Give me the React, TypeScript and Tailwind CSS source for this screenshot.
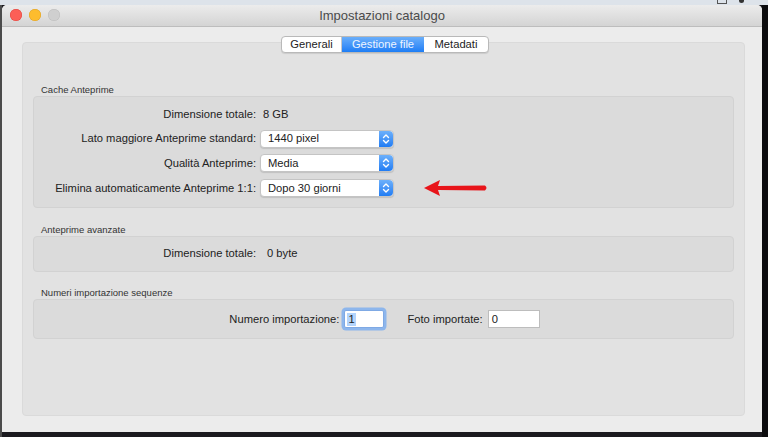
import React from 'react';

const font = { fontFamily: '"Liberation Sans", Arial, sans-serif' };

function Stepper() {
  return (
    <div className="flex h-full w-[14px] items-center justify-center rounded-r-[4px] bg-gradient-to-b from-[#6cb0fb] to-[#1f7cf3]">
      <svg width="8" height="12" viewBox="0 0 8 12" fill="none" stroke="white" strokeWidth="1.4" strokeLinecap="round" strokeLinejoin="round">
        <path d="M1.5 4.5 L4 2 L6.5 4.5" />
        <path d="M1.5 7.5 L4 10 L6.5 7.5" />
      </svg>
    </div>
  );
}

function Popup({ value }: { value: string }) {
  return (
    <div className="ml-[4px] flex h-[18px] w-[134px] items-center rounded-[4px] border border-[#c4c4c4] bg-white shadow-[0_1px_1px_rgba(0,0,0,0.12)]">
      <span className="flex-1 pl-[7px] text-[11.2px] text-[#222]">{value}</span>
      <Stepper />
    </div>
  );
}

function Row({ label, children }: { label: string; children: React.ReactNode }) {
  return (
    <div className="flex h-[18px] items-center">
      <div className="w-[222px] text-right text-[11.2px] text-[#222]">{label}</div>
      {children}
    </div>
  );
}

function Group({ title, children, className }: { title: string; children: React.ReactNode; className: string }) {
  return (
    <div className="flex flex-col">
      <div className="pl-[8px] text-[9.5px] leading-[12px] text-[#333]">{title}</div>
      <div className={'rounded-[4px] border border-[#d2d2d2] bg-[#dbdbdb] ' + className}>{children}</div>
    </div>
  );
}

function Arrow() {
  return (
    <svg className="ml-[29px]" width="66" height="20" viewBox="0 0 66 20">
      <path d="M1 10 L17 2 L15 8 L62 7.6 Q65 10 62 12.4 L15 12 L17 18 Z" fill="#e8141a" />
    </svg>
  );
}

export default function App() {
  return (
    <div className="relative flex h-[437px] w-[768px] flex-col overflow-hidden bg-[#1b1a1f]" style={font}>
      <div className="flex h-[5px] shrink-0 items-start bg-[#dde3ea]">
        <div className="ml-[717px] h-[4px] w-[10px] border border-t-0 border-[#555]" />
        <div className="ml-[12px] h-[3px] w-[5px] rounded-b-full bg-[#333]" />
      </div>
      <div className="flex min-h-0 flex-1">
        <div className="w-[2px] bg-[#4b4b4b]" />
        <div className="flex h-[427px] w-[760px] flex-col rounded-t-[5px] bg-[#ececec]">
          <div className="relative flex h-[22px] items-center justify-center rounded-t-[5px] border-b border-[#bdbdbd] bg-gradient-to-b from-[#ececec] to-[#d4d4d4]">
            <div className="absolute left-[8px] top-[4px] flex gap-[7px]">
              <div className="h-[12px] w-[12px] rounded-full bg-[#fc5f57] shadow-[inset_0_0_0_0.5px_#e0443e]" />
              <div className="h-[12px] w-[12px] rounded-full bg-[#fdbc2e] shadow-[inset_0_0_0_0.5px_#dea123]" />
              <div className="h-[12px] w-[12px] rounded-full bg-[#cfcfcf] shadow-[inset_0_0_0_0.5px_#bcbcbc]" />
            </div>
            <span className="text-[13px] text-[#4b4b4b]">Impostazioni catalogo</span>
          </div>

          <div className="flex flex-1 flex-col pl-[20px] pr-[17px] pb-[16px]">
            <div className="relative z-10 mt-[9px] flex h-[17px] justify-center">
              <div className="ml-[3px] flex overflow-hidden rounded-[4px] border border-[#b9b9b9] bg-white text-[11.2px] shadow-[0_1px_1px_rgba(0,0,0,0.1)]">
                <div className="flex w-[60px] items-center justify-center border-r border-[#c8c8c8] text-[#222]">Generali</div>
                <div className="flex w-[82px] items-center justify-center bg-gradient-to-b from-[#69aefa] to-[#1c7df5] text-[#eef5ff]">Gestione file</div>
                <div className="flex w-[64px] items-center justify-center text-[#222]">Metadati</div>
              </div>
            </div>

            <div className="-mt-[11px] flex flex-1 flex-col rounded-[4px] border border-[#dadada] bg-[#e2e2e2] px-[10px] pt-[41px]">
              <Group title="Cache Anteprime" className="flex flex-col gap-[6.7px] pt-[8px] pb-[10px]">
                <Row label="Dimensione totale:">
                  <span className="ml-[7px] text-[11.2px] text-[#222]">8 GB</span>
                </Row>
                <Row label="Lato maggiore Anteprime standard:">
                  <Popup value="1440 pixel" />
                </Row>
                <Row label="Qualità Anteprime:">
                  <Popup value="Media" />
                </Row>
                <Row label="Elimina automaticamente Anteprime 1:1:">
                  <Popup value="Dopo 30 giorni" />
                  <Arrow />
                </Row>
              </Group>

              <div className="h-[16px]" />
              <Group title="Anteprime avanzate" className="pt-[7px] pb-[9px]">
                <Row label="Dimensione totale:">
                  <span className="ml-[11px] text-[11.2px] text-[#222]">0 byte</span>
                </Row>
              </Group>

              <div className="h-[15px]" />
              <Group title="Numeri importazione sequenze" className="flex h-[40px] items-center justify-center">
                <div className="ml-[2px] flex items-center text-[11.2px] text-[#222]">
                  <span>Numero importazione:</span>
                  <div className="ml-[5px] flex h-[18px] w-[40px] items-center rounded-[2px] border border-[#7fa9e4] bg-white pl-[2px] shadow-[0_0_0_2.5px_#8db6ec]">
                    <span className="bg-[#b3d4fc] px-[1px] leading-[13px]">1</span>
                  </div>
                  <span className="ml-[23px]">Foto importate:</span>
                  <div className="ml-[5px] flex h-[18px] w-[52px] items-center border border-[#bdbdbd] bg-white pl-[3px]">0</div>
                </div>
              </Group>
            </div>
          </div>
        </div>
        <div className="w-[6px] bg-[#0c0c0e]" />
      </div>
    </div>
  );
}
